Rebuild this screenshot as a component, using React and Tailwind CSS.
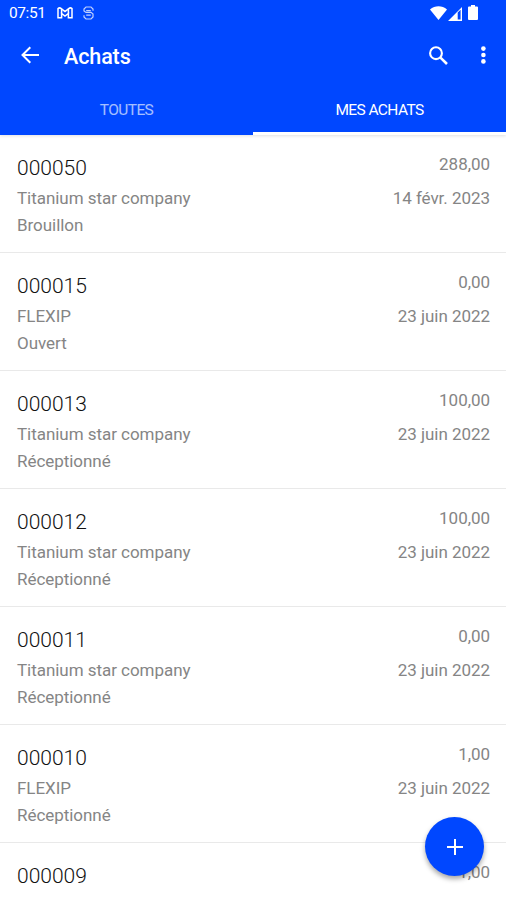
import clsx from "clsx";

const purchases = [
  { number: "000050", supplier: "Titanium star company", status: "Brouillon", amount: "288,00", date: "14 févr. 2023" },
  { number: "000015", supplier: "FLEXIP", status: "Ouvert", amount: "0,00", date: "23 juin 2022" },
  { number: "000013", supplier: "Titanium star company", status: "Réceptionné", amount: "100,00", date: "23 juin 2022" },
  { number: "000012", supplier: "Titanium star company", status: "Réceptionné", amount: "100,00", date: "23 juin 2022" },
  { number: "000011", supplier: "Titanium star company", status: "Réceptionné", amount: "0,00", date: "23 juin 2022" },
  { number: "000010", supplier: "FLEXIP", status: "Réceptionné", amount: "1,00", date: "23 juin 2022" },
  { number: "000009", supplier: "FLEXIP", status: "Réceptionné", amount: "1,00", date: "23 juin 2022" },
];

function StatusBar() {
  return (
    <div className="flex h-[27px] items-center pl-[9px] pr-[28px]">
      <span className="w-[48px] text-[15.5px] leading-none tracking-[-0.4px]">07:51</span>
      <svg className="mt-[-1px] h-[12px] w-[16px]" viewBox="0 0 16 12" fill="none" stroke="currentColor" strokeWidth="1.5">
        <path d="M1 1.6Q2.5.2 4.3 1.6L8 4.6 11.7 1.6Q13.5.2 15 1.6V10.8H11.4V6.4L8 9 4.6 6.4V10.8H1Z" />
        <path d="M4.6 2V6.4M11.4 2V6.4" />
      </svg>
      <svg className="ml-[10px] mt-[-1px] h-[14px] w-[11px] opacity-75" viewBox="0 0 11 14" fill="none" stroke="currentColor" strokeWidth="1.2">
        <path d="M10 4.8V3L8 1H3L1 3V5L3 6.4H8L10 8V11L8 13H3L1 11V9.3" />
        <path d="M7.8 4.6H3.2M3.2 9.2H7.8" />
      </svg>
      <div className="ml-auto mt-[-2px] flex items-center">
        <svg className="h-[14px] w-[17px]" viewBox="0 0 17 14" fill="currentColor">
          <path d="M8.5 14 0 3.4C5-.7 12-.7 17 3.4Z" />
        </svg>
        <svg className="ml-px mt-[2px] h-[14px] w-[14px]" viewBox="0 0 14 14" fill="currentColor">
          <path fillRule="evenodd" d="M14 0V14H0ZM9.7 5.5V12.6H12.6V2.7Z" />
        </svg>
        <svg className="ml-[6px] mt-[-1px] h-[15px] w-[10px]" viewBox="0 0 10 15" fill="currentColor">
          <path d="M3 0H7V1.5H9Q10 1.5 10 2.5V14Q10 15 9 15H1Q0 15 0 14V2.5Q0 1.5 1 1.5H3Z" />
        </svg>
      </div>
    </div>
  );
}

function Toolbar() {
  return (
    <div className="flex h-[59px] items-center pl-[21px] pr-[20px]">
      <svg className="mt-[-3px] h-[18px] w-[18px]" viewBox="0 0 18 18" fill="none" stroke="currentColor" strokeWidth="2">
        <path d="M18 9H2M9.3 1.2 1.5 9l7.8 7.8" />
      </svg>
      <h1 className="ml-[25px] text-[21.5px] font-medium leading-none tracking-[-0.1px]">Achats</h1>
      <svg className="ml-auto mt-[-3px] h-[19px] w-[20px]" viewBox="0 0 20 19" fill="none" stroke="currentColor" strokeWidth="2.1">
        <circle cx="8" cy="7.2" r="5.9" />
        <path d="m12.2 11.4 6.8 6.6" strokeWidth="2.6" />
      </svg>
      <svg className="ml-[32px] mt-[-3px] h-[18px] w-[6px]" viewBox="0 0 6 18" fill="currentColor">
        <circle cx="3.4" cy="2.6" r="2.3" />
        <circle cx="3.4" cy="9" r="2.3" />
        <circle cx="3.4" cy="15.4" r="2.3" />
      </svg>
    </div>
  );
}

function Tab({ label, active }) {
  return (
    <button
      className={clsx(
        "flex h-[49px] flex-1 items-center justify-center border-b-[3px] pt-[3px] text-[15.5px] leading-none tracking-[-0.6px]",
        active ? "border-white text-white" : "border-[#0047ff] text-white/65"
      )}
    >
      {label}
    </button>
  );
}

function PurchaseRow({ purchase }) {
  return (
    <li className="flex h-[118px] shrink-0 justify-between border-b border-[#e9e9e9] pl-[17px] pr-[16px] text-[17px] tracking-[-0.04px] text-[#858585]">
      <div className="pt-[19px]">
        <p className="text-[21px] font-light leading-[28px] tracking-normal text-[#111]">{purchase.number}</p>
        <p className="mt-[3px] leading-[27px]">{purchase.supplier}</p>
        <p className="leading-[27px]">{purchase.status}</p>
      </div>
      <div className="pt-[16px] text-right">
        <p className="leading-[27px]">{purchase.amount}</p>
        <p className="mt-[7px] leading-[27px]">{purchase.date}</p>
      </div>
    </li>
  );
}

export default function App() {
  return (
    <div className="relative flex h-[900px] w-[506px] flex-col overflow-hidden bg-white font-['Roboto',sans-serif]">
      <header className="shrink-0 bg-[#0047ff] text-white shadow-[0_1px_3px_rgba(0,0,0,0.12)]">
        <StatusBar />
        <Toolbar />
        <nav className="flex">
          <Tab label="TOUTES" />
          <Tab label="MES ACHATS" active />
        </nav>
      </header>

      <ul className="flex flex-col">
        {purchases.map((purchase) => (
          <PurchaseRow key={purchase.number} purchase={purchase} />
        ))}
      </ul>

      <button
        aria-label="Ajouter"
        className="absolute bottom-[24px] right-[22px] flex h-[59px] w-[59px] items-center justify-center rounded-full bg-[#0047ff] text-white shadow-[0_3px_5px_rgba(0,0,0,0.35)]"
      >
        <svg className="h-[16px] w-[16px]" viewBox="0 0 16 16" stroke="currentColor" strokeWidth="2">
          <path d="M8 0V16M0 8H16" />
        </svg>
      </button>
    </div>
  );
}
